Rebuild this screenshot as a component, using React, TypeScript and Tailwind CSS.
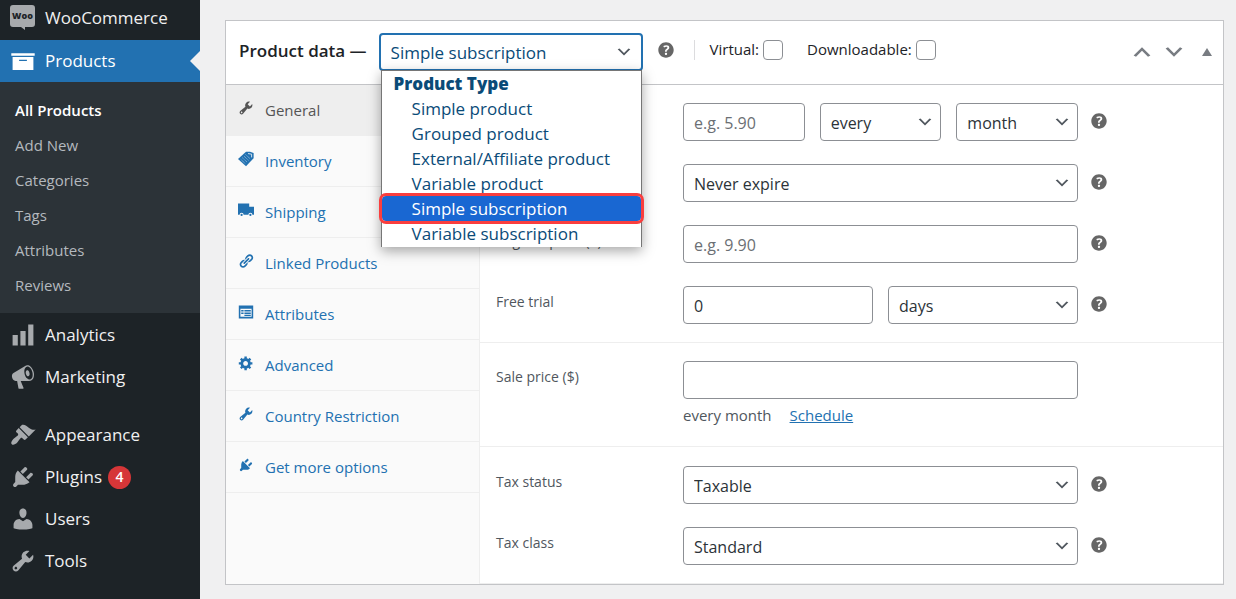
import React, { useState } from 'react';

interface IconProps {
  className?: string;
}

const PATHS = {
  archive: 'M19 4v2H1V4h18zM2 7h16v10H2V7zm11 3V9H7v1h6z',
  chart: 'M18 18V2h-4v16h4zm-6 0V7H8v11h4zm-6 0v-8H2v8h4z',
  megaphone: 'M18.15 5.94c.46 1.62.38 3.22-.02 4.48-.42 1.28-1.26 2.18-2.3 2.48-.16.06-.26.06-.4.06-.06.02-.12.02-.18.02-.06.02-.14.02-.22.02h-6.8l2.22 5.5c.02.14-.06.26-.14.34-.08.1-.24.16-.34.16H6.95c-.1 0-.26-.06-.34-.16-.08-.08-.16-.2-.14-.34l-1-5.5H4.25l-.02-.02c-.5.06-1.08-.18-1.54-.62s-.88-1.08-1.06-1.88c-.24-.8-.2-1.56-.02-2.2.18-.62.58-1.08 1.06-1.3l.02-.02 9-5.4c.1-.06.18-.1.24-.16.06-.04.14-.08.24-.12.16-.08.28-.12.5-.18 1.04-.3 2.24.1 3.22.98s1.84 2.24 2.26 3.86zm-2.58 5.98h-.02c.4-.1.74-.34 1.04-.7.58-.7.86-1.76.86-3.04 0-.64-.1-1.3-.28-1.98-.34-1.36-1.02-2.5-1.78-3.24s-1.68-1.1-2.46-.88c-.82.22-1.4.96-1.7 2-.32 1.04-.28 2.36.06 3.72.38 1.36 1 2.5 1.8 3.24.78.74 1.62 1.1 2.48.88zm-2.54-7.08c.22-.04.42-.02.62.04.38.16.76.48 1.02 1s.42 1.2.42 1.78c0 .3-.04.56-.12.8-.18.48-.44.84-.86.94-.34.1-.8-.06-1.14-.4s-.64-.86-.78-1.5c-.18-.62-.12-1.24.02-1.72s.48-.84.82-.94z',
  brush: 'M14.48 11.06L7.41 3.99l1.5-1.5c.5-.56 2.3-.47 3.51.32 1.21.8 1.43 1.28 2.91 2.1 1.18.64 2.45 1.26 4.45.85zm-.71.71L6.7 4.7 4.93 6.47c-.39.39-.39 1.02 0 1.41l1.06 1.06c.39.39.39 1.03 0 1.42-.6.6-1.43 1.11-2.21 1.69-.35.26-.7.53-1.01.84C1.43 14.23.4 16.08 1.4 17.07c.99 1 2.84-.03 4.18-1.36.31-.31.58-.66.85-1.02.57-.78 1.08-1.61 1.69-2.21.39-.39 1.02-.39 1.41 0l1.06 1.06c.39.39 1.02.39 1.41 0z',
  plug: 'M13.11 4.36L9.87 7.6 8 5.73l3.24-3.24c.35-.34 1.05-.2 1.56.32.52.51.66 1.21.31 1.55zm-8 1.77l.91-1.12 9.01 9.01-1.19.84c-.71.71-2.63 1.16-3.82 1.16H6.14L4.9 17.26c-.59.59-1.54.59-2.12 0-.59-.58-.59-1.53 0-2.12l1.24-1.24v-3.88c0-1.13.4-3.19 1.09-3.89zm7.26 3.97l3.24-3.24c.34-.35 1.04-.21 1.55.31.52.51.66 1.21.31 1.55l-3.24 3.25z',
  user: 'M10 9.25c-2.27 0-2.73-3.44-2.73-3.44C7 4.02 7.82 2 9.97 2c2.16 0 2.98 2.02 2.71 3.81 0 0-.41 3.44-2.68 3.44zm0 2.57L12.72 10c2.39 0 4.52 2.33 4.52 4.53v2.49s-3.65 1.13-7.24 1.13c-3.65 0-7.24-1.13-7.24-1.13v-2.49c0-2.25 1.94-4.48 4.47-4.48z',
  wrench: 'M16.68 9.77c-1.34 1.34-3.3 1.67-4.95.99l-5.41 6.52c-.99.99-2.59.99-3.58 0s-.99-2.59 0-3.57l6.52-5.42c-.68-1.65-.35-3.61.99-4.95 1.28-1.28 3.12-1.62 4.72-1.06l-2.89 2.89 2.82 2.82 2.86-2.87c.53 1.58.18 3.39-1.08 4.65zM3.81 16.21c.4.39 1.04.39 1.43 0 .4-.4.4-1.04 0-1.43-.39-.4-1.03-.4-1.43 0-.39.39-.39 1.03 0 1.43z',
  gear: 'M18 12h-2.18c-.17.7-.44 1.35-.81 1.93l1.54 1.54-2.1 2.1-1.54-1.54c-.58.36-1.23.63-1.91.79V19H8v-2.18c-.68-.16-1.33-.43-1.91-.79l-1.54 1.54-2.12-2.12 1.54-1.54c-.36-.58-.63-1.23-.79-1.91H1V9.03h2.17c.16-.7.44-1.35.8-1.94L2.43 5.55l2.1-2.1 1.54 1.54c.58-.37 1.24-.64 1.93-.81V2h3v2.18c.68.16 1.33.43 1.91.79l1.54-1.54 2.12 2.12-1.54 1.54c.36.59.64 1.24.8 1.94H18V12zm-8.5 1.5c1.66 0 3-1.34 3-3s-1.34-3-3-3-3 1.34-3 3 1.34 3 3 3z',
  link: 'M17.74 2.76c1.68 1.69 1.68 4.41 0 6.1l-1.53 1.52c-1.12 1.12-2.7 1.47-4.14 1.09l2.62-2.61.76-.77.76-.76c.84-.84.84-2.2 0-3.04-.84-.85-2.2-.85-3.04 0l-.77.76-3.38 3.38c-.37-1.44-.02-3.02 1.1-4.14l1.52-1.53c1.69-1.68 4.42-1.68 6.1 0zM8.59 13.43l5.34-5.34c.42-.42.42-1.1 0-1.52-.44-.43-1.13-.39-1.53 0l-5.33 5.34c-.42.42-.42 1.1 0 1.52.44.43 1.13.39 1.52 0zm-.76 2.29l4.14-4.15c.38 1.44.03 3.02-1.09 4.14l-1.52 1.53c-1.69 1.68-4.41 1.68-6.1 0-1.68-1.68-1.68-4.42 0-6.1l1.53-1.52c1.12-1.12 2.7-1.47 4.14-1.1l-4.14 4.15c-.85.84-.85 2.2 0 3.05.84.84 2.2.84 3.04 0z',
  truck: 'M0 2h14v4h6v10h-2a2.5 2.5 0 0 0-5 0H7a2.5 2.5 0 0 0-5 0H0zM4.500 14.800a1.400 1.400 0 1 1 0 2.800 1.400 1.400 0 0 1 0-2.800zM15.500 14.800a1.400 1.400 0 1 1 0 2.800 1.400 1.400 0 0 1 0-2.800z',
  form: 'M1 2h18v16H1zM3 6v10h14V6zM4 7.5h3v2H4zM8 7.5h8v2H8zM4 10.500h3v2H4zM8 10.500h8v2H8zM8 13.500h8v1.500H8z',
  help: 'M17 10c0-3.87-3.14-7-7-7-3.87 0-7 3.13-7 7s3.13 7 7 7c3.86 0 7-3.13 7-7zm-6.3 1.48H9.14v-.43c0-.38.08-.7.24-.98s.46-.57.88-.89c.41-.29.68-.53.81-.71.14-.18.2-.39.2-.62 0-.25-.09-.44-.28-.58-.19-.13-.45-.19-.79-.19-.58 0-1.25.19-2 .57l-.64-1.28c.87-.49 1.8-.74 2.77-.74.81 0 1.45.2 1.92.58.48.39.71.91.71 1.55 0 .43-.09.8-.29 1.11-.19.32-.57.67-1.11 1.06-.38.28-.61.49-.71.63-.1.15-.15.34-.15.57v.35zm-1.47 2.74c-.18-.17-.27-.42-.27-.73 0-.33.08-.58.26-.75s.43-.25.77-.25c.32 0 .57.09.75.26s.27.42.27.74c0 .3-.09.55-.27.72-.18.18-.43.27-.75.27-.33 0-.58-.09-.76-.26z',
  down: 'M5 6l5 5 5-5 2 1-7 7-7-7 2-1z',
  up: 'M15 14l-5-5-5 5-2-1 7-7 7 7-2 1z',
};

type IconName = keyof typeof PATHS;

const Icon: React.FC<IconProps & { name: IconName }> = ({ name, className }) => (
  <svg viewBox="0 0 20 20" fill="currentColor" fillRule="evenodd" aria-hidden="true" className={className}>
    <path d={PATHS[name]} />
  </svg>
);

const WooIcon: React.FC<IconProps> = ({ className }) => (
  <svg viewBox="0 0 25 25" aria-hidden="true" className={className}>
    <path fill="#a7aaad" d="M3 0h19a3 3 0 0 1 3 3v16a3 3 0 0 1-3 3h-7v3l-4-3H3a3 3 0 0 1-3-3V3a3 3 0 0 1 3-3z" />
    <text x="12.5" y="14" textAnchor="middle" fontSize="9" fontWeight="800" fill="#1d2327">Woo</text>
  </svg>
);

const TagIcon: React.FC<IconProps> = ({ className }) => (
  <svg viewBox="0 0 20 20" aria-hidden="true" className={className}>
    <path fill="#2271b1" d="M10 1h5l4.500 1.500V9l-9.500 10L0 10z" />
    <path fill="none" stroke="#a9c8e2" d="M3.500 10.500l6 5.500M5.500 8.500l6 5.500M7.500 6.500l6 5.500M9.500 4.500l5.500 5" strokeWidth="1.100" strokeDasharray="1.200 .9" />
    <path fill="none" stroke="#fafafa" d="M12.500 3.200l4.500.8v4" />
  </svg>
);

const HelpTip: React.FC<IconProps> = ({ className = '' }) => (
  <button type="button" aria-label="Help" className={`shrink-0 text-[#666] ${className}`}>
    <Icon name="help" className="size-[22px]" />
  </button>
);

const MenuItem: React.FC<{ icon: IconName; label: string; badge?: number }> = ({ icon, label, badge }) => (
  <a href="#" className="flex h-[42px] items-center pt-[2px] pl-[10px] text-[#f0f0f1]">
    <Icon name={icon} className="size-[26px] text-[#a7aaad]" />
    <span className="ml-[9px]">{label}</span>
    {badge && (
      <span className="ml-[6px] flex size-[23px] items-center justify-center rounded-full bg-[#d63638] text-sm font-semibold text-white">{badge}</span>
    )}
  </a>
);

const fieldClasses = 'h-[38px] w-full min-w-0 rounded border border-[#8c8f94] bg-white px-[10px] pt-[2px] text-base text-[#2c3338] placeholder:text-[#6b6f74]';

const SelectField: React.FC<{ id: string; options: string[]; label?: string }> = ({ id, options, label }) => (
  <div className="relative min-w-0">
    <select id={id} aria-label={label} className={`${fieldClasses} appearance-none`}>
      {options.map(option => <option key={option}>{option}</option>)}
    </select>
    <Icon name="down" className="pointer-events-none absolute top-[10px] right-[7px] size-[18px] text-[#50575e]" />
  </div>
);

const FormRow: React.FC<{ id: string; label?: string; help?: boolean; cols?: string; children: React.ReactNode }> = ({ id, label, help = true, cols = 'grid-cols-1', children }) => (
  <div className="flex">
    <div className="w-[187px] shrink-0 pt-[6px] text-sm leading-5 text-[#50575e]">
      {label && <label htmlFor={id}>{label}</label>}
    </div>
    <div className={`grid min-w-0 flex-1 gap-[15px] ${cols}`}>{children}</div>
    <div className="w-[145px] shrink-0 pt-[7px] pl-[10px]">{help && <HelpTip />}</div>
  </div>
);

const submenu = ['All Products', 'Add New', 'Categories', 'Tags', 'Attributes', 'Reviews'];

const tabs: { label: string; icon: IconName | 'tag' }[] = [
  { label: 'General', icon: 'wrench' },
  { label: 'Inventory', icon: 'tag' },
  { label: 'Shipping', icon: 'truck' },
  { label: 'Linked Products', icon: 'link' },
  { label: 'Attributes', icon: 'form' },
  { label: 'Advanced', icon: 'gear' },
  { label: 'Country Restriction', icon: 'wrench' },
  { label: 'Get more options', icon: 'plug' },
];

const productTypes = [
  'Simple product',
  'Grouped product',
  'External/Affiliate product',
  'Variable product',
  'Simple subscription',
  'Variable subscription',
];

const Sidebar: React.FC = () => (
  <nav className="w-[200px] shrink-0 bg-[#1d2327] text-[17px]">
    <a href="#" className="flex h-10 items-center pb-[5px] pl-[10px] text-[#f0f0f1]">
      <WooIcon className="size-[25px]" />
      <span className="ml-[10px]">WooCommerce</span>
    </a>
    <a href="#" className="relative flex h-[42px] items-center bg-[#2271b1] pl-[10px] text-white">
      <Icon name="archive" className="size-[26px]" />
      <span className="ml-[9px]">Products</span>
      <span className="absolute right-0 border-y-[10px] border-r-[10px] border-y-transparent border-r-[#f0f0f1]" />
    </a>
    <ul className="bg-[#2c3338] pt-[11px] pb-[10px] text-[15px]">
      {submenu.map((item, i) => (
        <li key={item}>
          <a href="#" className={`flex h-[35px] items-center pl-[15px] ${i === 0 ? 'font-semibold text-white' : 'text-[#b4b9be]'}`}>{item}</a>
        </li>
      ))}
    </ul>
    <MenuItem icon="chart" label="Analytics" />
    <MenuItem icon="megaphone" label="Marketing" />
    <div className="h-4" />
    <MenuItem icon="brush" label="Appearance" />
    <MenuItem icon="plug" label="Plugins" badge={4} />
    <MenuItem icon="user" label="Users" />
    <MenuItem icon="wrench" label="Tools" />
  </nav>
);

const App: React.FC = () => {
  const [type, setType] = useState('Simple subscription');
  const [activeTab, setActiveTab] = useState('General');

  return (
    <div className="flex min-h-screen bg-[#f0f0f1] font-['Open_Sans','Noto_Sans',sans-serif]">
      <Sidebar />
      <main className="min-w-0 flex-1 pt-5 pr-3 pb-[15px] pl-[25px]">
        <section className="border border-[#c3c4c7] bg-white">
          <header className="flex h-16 items-center border-b border-[#c3c4c7] pb-[2px] pl-[13px]">
            <h2 className="pb-[2px] text-[17px] font-semibold text-[#1d2327]">Product data —</h2>
            <div className="relative ml-3 w-[264px]">
              <select
                aria-label="Product type"
                value={type}
                onChange={e => setType(e.target.value)}
                className="h-[38px] w-full appearance-none rounded border-2 border-[#2271b1] bg-white px-[10px] pt-[2px] text-[17px] text-[#0a4b78]"
              >
                {productTypes.map(name => <option key={name}>{name}</option>)}
              </select>
              <Icon name="down" className="pointer-events-none absolute top-[10px] right-[10px] size-[18px] text-[#50575e]" />
              <ul role="listbox" aria-label="Product Type" className="absolute top-[37px] left-[2px] z-10 w-[261px] border border-b-0 border-[#767676] bg-white pb-px text-[17px] leading-[25px] text-[#0a4b78] shadow-[0_4px_12px_rgba(0,0,0,0.35)]">
                <li role="presentation" className="pl-3 font-extrabold">Product Type</li>
                {productTypes.map(name => (
                  <li
                    key={name}
                    role="option"
                    aria-selected={name === type}
                    onClick={() => setType(name)}
                    className={`pl-[30px] ${name === type ? 'rounded-sm bg-[#1967d2] text-white outline-3 outline-[#fa3e3e]' : ''}`}
                  >
                    {name}
                  </li>
                ))}
              </ul>
            </div>
            <HelpTip className="mb-1 ml-3" />
            <div className="mb-1 ml-[17px] flex h-5 items-center border-l border-[#dcdcde] pl-[15px] text-[15px] text-[#1d2327]">
              <label className="flex items-center gap-1">
                Virtual:
                <input type="checkbox" className="size-5 appearance-none rounded border border-[#8c8f94] bg-white" />
              </label>
              <label className="ml-6 flex items-center gap-1">
                Downloadable:
                <input type="checkbox" className="size-5 appearance-none rounded border border-[#8c8f94] bg-white" />
              </label>
            </div>
            <div className="ml-auto flex items-center gap-2 pr-[11px] text-[#787c82]">
              <button type="button" aria-label="Move up"><Icon name="up" className="size-6" /></button>
              <button type="button" aria-label="Move down"><Icon name="down" className="size-6" /></button>
              <button type="button" aria-label="Toggle panel" className="ml-2">
                <svg viewBox="0 0 10 8" fill="currentColor" className="h-2 w-[10px]"><path d="M5 0l5 8H0z" /></svg>
              </button>
            </div>
          </header>

          <div className="flex">
            <ul className="w-[254px] shrink-0 border-r border-[#eee] bg-[#fafafa]">
              {tabs.map(({ label, icon }) => (
                <li key={label}>
                  <a
                    href="#"
                    onClick={e => { e.preventDefault(); setActiveTab(label); }}
                    className={`flex h-[51px] items-center border-b border-[#eee] pl-3 text-[15px] ${label === activeTab ? 'bg-[#eee] text-[#555]' : 'text-[#2271b1]'}`}
                  >
                    {icon === 'tag' ? <TagIcon className="mb-1 size-4" /> : <Icon name={icon} className="mb-1 size-4" />}
                    <span className="ml-[11px]">{label}</span>
                  </a>
                </li>
              ))}
            </ul>

            <form className="min-w-0 flex-1">
              <div className="space-y-[23px] border-b border-[#eee] py-[18px] pl-4">
                <FormRow id="price" cols="grid-cols-3">
                  <input id="price" type="text" aria-label="Price" placeholder="e.g. 5.90" className={fieldClasses} />
                  <SelectField id="interval" label="Interval" options={['every', 'every 2nd', 'every 3rd']} />
                  <SelectField id="period" label="Period" options={['month', 'day', 'week', 'year']} />
                </FormRow>
                <FormRow id="length">
                  <SelectField id="length" label="Length" options={['Never expire', '1 month', '2 months']} />
                </FormRow>
                <FormRow id="regular" label="Regular price ($)">
                  <input id="regular" type="text" placeholder="e.g. 9.90" className={fieldClasses} />
                </FormRow>
                <FormRow id="trial" label="Free trial" cols="grid-cols-2">
                  <input id="trial" type="text" defaultValue="0" className={fieldClasses} />
                  <SelectField id="trial-period" label="Trial period" options={['days', 'weeks', 'months', 'years']} />
                </FormRow>
              </div>

              <div className="border-b border-[#eee] pt-[18px] pb-5 pl-4">
                <FormRow id="sale" label="Sale price ($)" help={false}>
                  <div>
                    <input id="sale" type="text" className={fieldClasses} />
                    <p className="mt-[5px] text-[15px] leading-[22px] text-[#50575e]">
                      every month
                      <a href="#" className="ml-[18px] text-[#2271b1] underline">Schedule</a>
                    </p>
                  </div>
                </FormRow>
              </div>

              <div className="space-y-[23px] border-b border-[#eee] pt-[19px] pb-[18px] pl-4">
                <FormRow id="tax-status" label="Tax status">
                  <SelectField id="tax-status" options={['Taxable', 'Shipping only', 'None']} />
                </FormRow>
                <FormRow id="tax-class" label="Tax class">
                  <SelectField id="tax-class" options={['Standard', 'Reduced rate', 'Zero rate']} />
                </FormRow>
              </div>
            </form>
          </div>
        </section>
      </main>
    </div>
  );
};

export default App;
